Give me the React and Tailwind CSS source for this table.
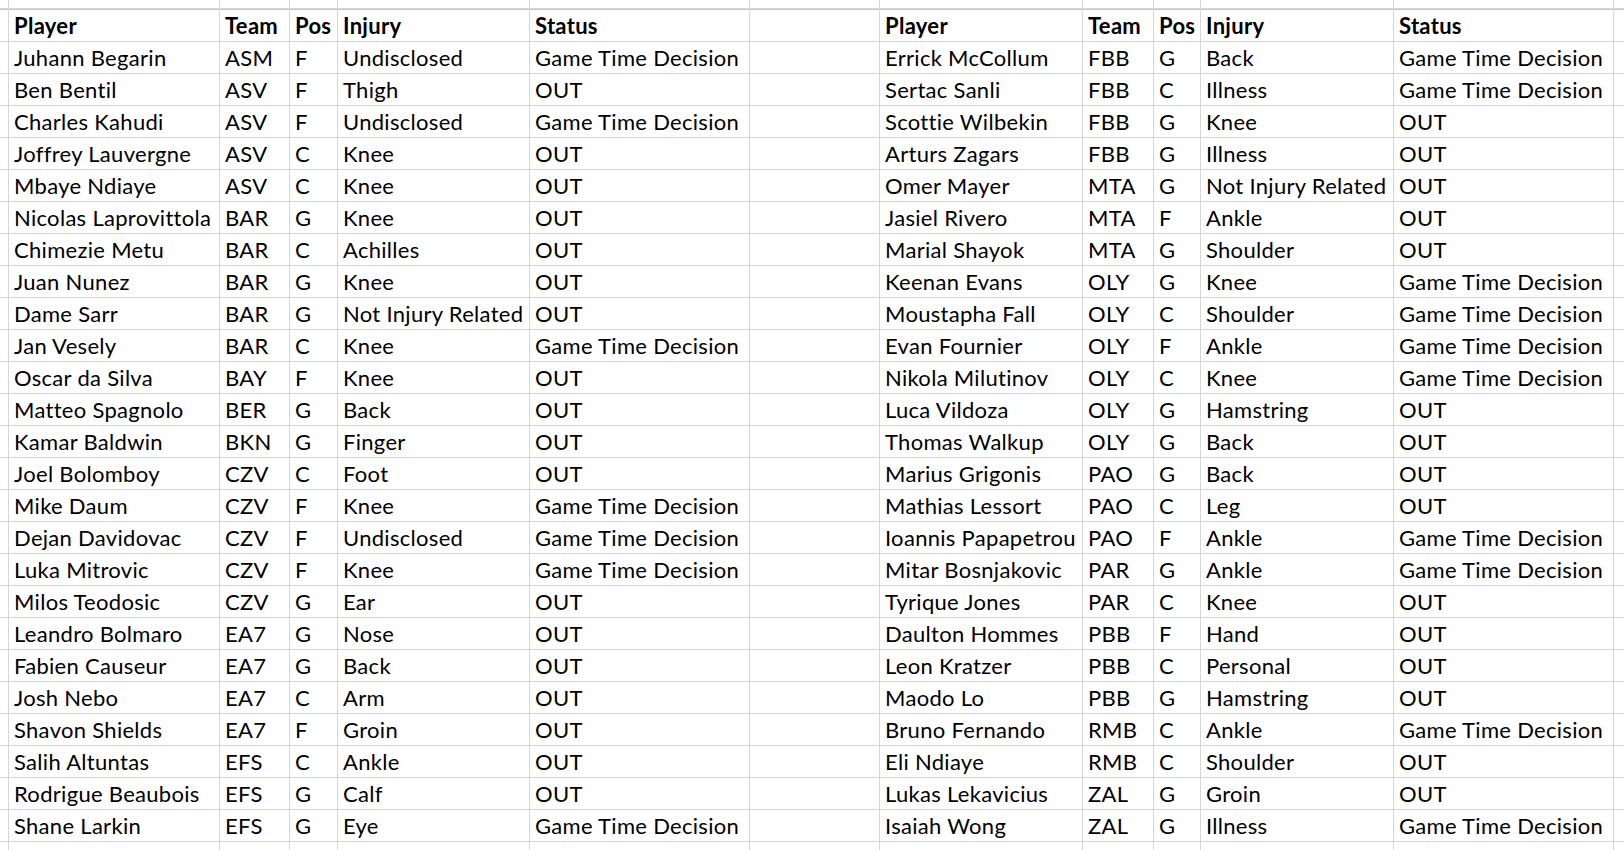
import React from "react";

/* ================= DATA ================= */
const GTD = "Game Time Decision";

const leftRows = [
  ["Juhann Begarin", "ASM", "F", "Undisclosed", GTD],
  ["Ben Bentil", "ASV", "F", "Thigh", "OUT"],
  ["Charles Kahudi", "ASV", "F", "Undisclosed", GTD],
  ["Joffrey Lauvergne", "ASV", "C", "Knee", "OUT"],
  ["Mbaye Ndiaye", "ASV", "C", "Knee", "OUT"],
  ["Nicolas Laprovittola", "BAR", "G", "Knee", "OUT"],
  ["Chimezie Metu", "BAR", "C", "Achilles", "OUT"],
  ["Juan Nunez", "BAR", "G", "Knee", "OUT"],
  ["Dame Sarr", "BAR", "G", "Not Injury Related", "OUT"],
  ["Jan Vesely", "BAR", "C", "Knee", GTD],
  ["Oscar da Silva", "BAY", "F", "Knee", "OUT"],
  ["Matteo Spagnolo", "BER", "G", "Back", "OUT"],
  ["Kamar Baldwin", "BKN", "G", "Finger", "OUT"],
  ["Joel Bolomboy", "CZV", "C", "Foot", "OUT"],
  ["Mike Daum", "CZV", "F", "Knee", GTD],
  ["Dejan Davidovac", "CZV", "F", "Undisclosed", GTD],
  ["Luka Mitrovic", "CZV", "F", "Knee", GTD],
  ["Milos Teodosic", "CZV", "G", "Ear", "OUT"],
  ["Leandro Bolmaro", "EA7", "G", "Nose", "OUT"],
  ["Fabien Causeur", "EA7", "G", "Back", "OUT"],
  ["Josh Nebo", "EA7", "C", "Arm", "OUT"],
  ["Shavon Shields", "EA7", "F", "Groin", "OUT"],
  ["Salih Altuntas", "EFS", "C", "Ankle", "OUT"],
  ["Rodrigue Beaubois", "EFS", "G", "Calf", "OUT"],
  ["Shane Larkin", "EFS", "G", "Eye", GTD],
];

const rightRows = [
  ["Errick McCollum", "FBB", "G", "Back", GTD],
  ["Sertac Sanli", "FBB", "C", "Illness", GTD],
  ["Scottie Wilbekin", "FBB", "G", "Knee", "OUT"],
  ["Arturs Zagars", "FBB", "G", "Illness", "OUT"],
  ["Omer Mayer", "MTA", "G", "Not Injury Related", "OUT"],
  ["Jasiel Rivero", "MTA", "F", "Ankle", "OUT"],
  ["Marial Shayok", "MTA", "G", "Shoulder", "OUT"],
  ["Keenan Evans", "OLY", "G", "Knee", GTD],
  ["Moustapha Fall", "OLY", "C", "Shoulder", GTD],
  ["Evan Fournier", "OLY", "F", "Ankle", GTD],
  ["Nikola Milutinov", "OLY", "C", "Knee", GTD],
  ["Luca Vildoza", "OLY", "G", "Hamstring", "OUT"],
  ["Thomas Walkup", "OLY", "G", "Back", "OUT"],
  ["Marius Grigonis", "PAO", "G", "Back", "OUT"],
  ["Mathias Lessort", "PAO", "C", "Leg", "OUT"],
  ["Ioannis Papapetrou", "PAO", "F", "Ankle", GTD],
  ["Mitar Bosnjakovic", "PAR", "G", "Ankle", GTD],
  ["Tyrique Jones", "PAR", "C", "Knee", "OUT"],
  ["Daulton Hommes", "PBB", "F", "Hand", "OUT"],
  ["Leon Kratzer", "PBB", "C", "Personal", "OUT"],
  ["Maodo Lo", "PBB", "G", "Hamstring", "OUT"],
  ["Bruno Fernando", "RMB", "C", "Ankle", GTD],
  ["Eli Ndiaye", "RMB", "C", "Shoulder", "OUT"],
  ["Lukas Lekavicius", "ZAL", "G", "Groin", "OUT"],
  ["Isaiah Wong", "ZAL", "G", "Illness", GTD],
];

const header = ["Player", "Team", "Pos", "Injury", "Status"];
const blank = ["", "", "", "", ""];

/* ================= ROW ================= */

// one sheet row: edge column, left table, spacer column, right table, edge column
const Row = ({ left, right, bold, top }) => {
  const edge = `bg-white ${top ? "border-t border-[#c4c4c4]" : ""}`;
  const cell = `bg-white h-full pl-[5px] flex items-center whitespace-nowrap overflow-hidden text-black ${
    bold ? "font-bold" : ""
  } ${top ? "border-t border-[#c4c4c4]" : ""}`;

  return (
    <>
      <div className={edge} />
      {left.map((v, i) => (
        <div key={"l" + i} className={cell}>
          {v}
        </div>
      ))}
      <div className={edge} />
      {right.map((v, i) => (
        <div key={"r" + i} className={cell}>
          {v}
        </div>
      ))}
      <div className={edge} />
    </>
  );
};

/* ================= PAGE ================= */

export default function App() {
  return (
    <div className="w-[1624px] h-[850px] overflow-hidden bg-white">
      <div
        className="grid gap-px bg-[#d6d6d6] text-[22px] tracking-[0.3px] grid-cols-[8px_210px_69px_47px_191px_219px_129px_202px_70px_46px_192px_219px_1fr] grid-rows-[8px_32px_repeat(25,31px)_20px]"
        style={{ fontFamily: "Lato, 'Open Sans', sans-serif" }}
      >
        <Row left={blank} right={blank} />
        <Row left={header} right={header} bold top />
        {leftRows.map((l, i) => (
          <Row key={i} left={l} right={rightRows[i]} />
        ))}
        <Row left={blank} right={blank} />
      </div>
    </div>
  );
}
